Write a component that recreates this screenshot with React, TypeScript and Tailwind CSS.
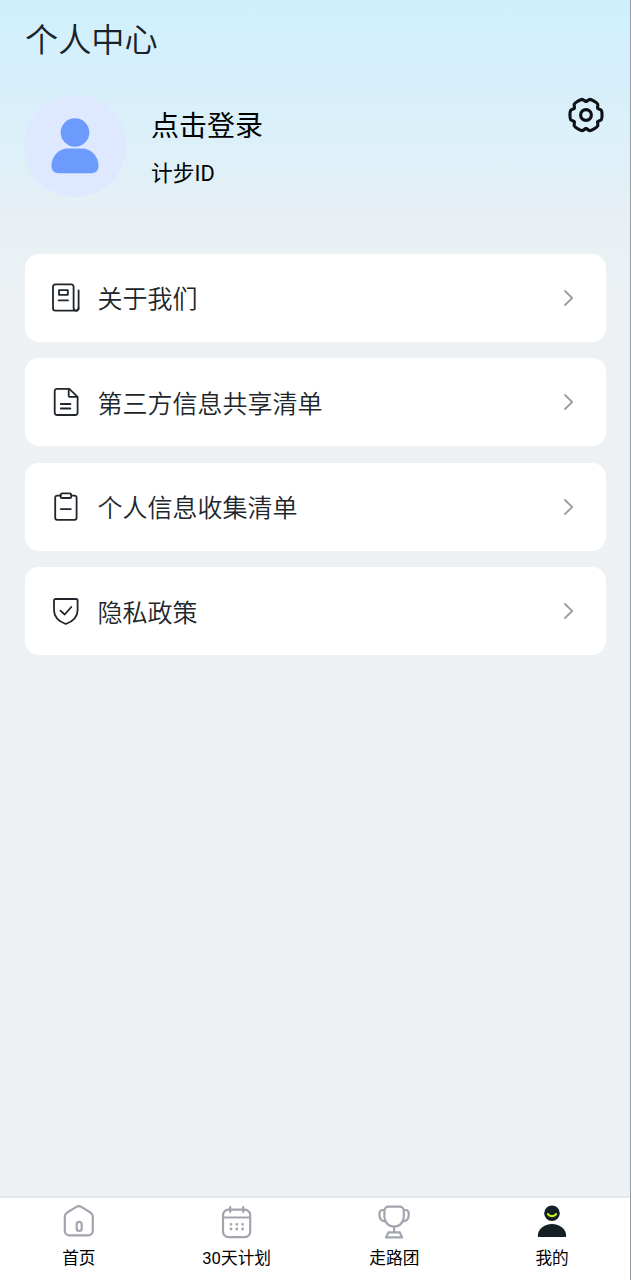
import React from 'react';

const AboutIcon = () => (
  <svg width="30" height="30" viewBox="0 0 30 30" fill="none" stroke="#20262b" strokeWidth="1.8" strokeLinecap="round" strokeLinejoin="round">
    <path d="M24.8 27.7H4.4A2.4 2.4 0 0 1 2 25.3V3.6A2.2 2.2 0 0 1 4.2 1.4h16.2A2.2 2.2 0 0 1 22.6 3.6v21.5a2.5 2.5 0 0 0 5 0V7.4" />
    <path d="M27.6 25.1a2.6 2.6 0 0 1-2.8 2.6" />
    <path d="M8 7.2h8.8v4.6H8zM7.6 17.4h9.4" />
  </svg>
);

const FileIcon = () => (
  <svg width="30" height="30" viewBox="0 0 30 30" fill="none" stroke="#20262b" strokeWidth="1.8" strokeLinecap="round" strokeLinejoin="round">
    <path d="M18.3 1.8H6A2.3 2.3 0 0 0 3.7 4.1v21.6A2.3 2.3 0 0 0 6 28h18.3a2.3 2.3 0 0 0 2.3-2.3V9.9z" />
    <path d="M17.7 2.2V9a.9.9 0 0 0 .9.9h7.6M9.8 17h9.6M9.8 21.5h9.6" />
  </svg>
);

const ClipboardIcon = () => (
  <svg width="30" height="30" viewBox="0 0 30 30" fill="none" stroke="#20262b" strokeWidth="1.8" strokeLinecap="round" strokeLinejoin="round">
    <path d="M9.8 3.6H6.2a2 2 0 0 0-2 2v20.2a2 2 0 0 0 2 2h17.4a2 2 0 0 0 2-2V5.6a2 2 0 0 0-2-2h-3.3" />
    <rect x="9.6" y="1.4" width="10.6" height="4.6" rx="1.6" />
    <path d="M9.8 17.1h10" />
  </svg>
);

const ShieldIcon = () => (
  <svg width="30" height="30" viewBox="0 0 30 30" fill="none" stroke="#20262b" strokeWidth="1.8" strokeLinecap="round" strokeLinejoin="round">
    <path d="M4.6 3h20.4a1.6 1.6 0 0 1 1.6 1.6v9.6c0 6.8-5.4 11.4-11.8 13.8C8.4 25.6 3 21 3 14.2V4.6A1.6 1.6 0 0 1 4.6 3z" />
    <path d="M9.4 14.6l4.3 3.9 6.6-7.5" />
  </svg>
);

// one lobe of the gear outline, repeated every 60 degrees
const GEAR_LOBE = 'M11.8-6.8C12.5-5.6 14.1-6 15.3-4.7 16.3-3.2 16.3 3.2 15.3 4.7 14.1 6 12.5 5.6 11.8 6.8';

const GearIcon = () => (
  <svg width="38" height="38" viewBox="-19 -19 38 38" fill="none" stroke="#0c1115" strokeWidth="3.1" strokeLinecap="round">
    {[0, 60, 120, 180, 240, 300].map((angle) => (
      <path key={angle} d={GEAR_LOBE} transform={`rotate(${angle})`} />
    ))}
    <circle r="5.4" />
  </svg>
);

const HomeIcon = () => (
  <svg width="36" height="36" viewBox="0 0 36 36" fill="none" stroke="#a2a5ae" strokeWidth="2.2" strokeLinejoin="round">
    <path d="M15.3 2.9L5.8 8.8A4.500 4.500 0 0 0 3.800 12.500V26.800a4.500 4.500 0 0 0 4.500 4.500h19a4.500 4.500 0 0 0 4.500-4.500V12.500a4.500 4.500 0 0 0-2-3.700L20.300 2.900a4.800 4.800 0 0 0-5 0z" />
    <rect x="15.7" y="17.8" width="5" height="9.2" rx="2.5" />
  </svg>
);

const CalendarIcon = () => (
  <svg width="36" height="36" viewBox="0 0 36 36" fill="none" stroke="#a2a5ae" strokeWidth="2.2" strokeLinecap="round">
    <rect x="4" y="5.6" width="27.2" height="27.6" rx="5.5" />
    <path d="M4.5 13.5h26.2M11.2 3v5M24.2 3v5" />
    <path d="M12 20.3h.01M17.8 20.3h.01M23.6 20.3h.01M12 25h.01M17.8 25h.01M23.6 25h.01" strokeWidth="2.8" />
  </svg>
);

const TrophyIcon = () => (
  <svg width="36" height="36" viewBox="0 0 36 36" fill="none" stroke="#a2a5ae" strokeWidth="2.2" strokeLinejoin="round">
    <path d="M12.5 2.6h11.200a4 4 0 0 1 4 4c0 3.500.8 6.200-.6 9.600-1.400 3.800-5 6.400-9 6.400s-7.600-2.600-9-6.400c-1.400-3.400-.6-6.100-.6-9.600a4 4 0 0 1 4-4z" />
    <path d="M8.300 6H6.200c-4.200 0-4.400 11.200 3.400 11.400M27.900 6H30c4.200 0 4.400 11.200-3.400 11.400M18.100 22.800v5.800M12.400 28.400h11.400l2.400 5H10z" />
  </svg>
);

const MineIcon = () => (
  <svg width="36" height="36" viewBox="0 0 36 36" fill="none">
    <circle cx="18" cy="9.3" r="7.8" fill="#151f26" />
    <path d="M14 10.2c1.400 2.500 6.600 2.500 8 0" stroke="#c4f51a" strokeWidth="2.3" strokeLinecap="round" />
    <path d="M3.800 32.200c0-7 6.300-12.100 14.200-12.100s14.200 5.100 14.200 12.100c0 .5-.3.800-.8.800H4.600c-.5 0-.8-.3-.8-.8z" fill="#151f26" />
  </svg>
);

const menu = [
  { label: '关于我们', icon: <AboutIcon /> },
  { label: '第三方信息共享清单', icon: <FileIcon /> },
  { label: '个人信息收集清单', icon: <ClipboardIcon /> },
  { label: '隐私政策', icon: <ShieldIcon /> },
];

const tabs = [
  { label: '首页', icon: <HomeIcon /> },
  { label: '30天计划', icon: <CalendarIcon /> },
  { label: '走路团', icon: <TrophyIcon /> },
  { label: '我的', icon: <MineIcon /> },
];

const App: React.FC = () => {
  return (
    <div className="flex h-[1280px] w-[631px] flex-col overflow-hidden border-r border-[#969da2] bg-[#edf1f4] bg-[linear-gradient(180deg,#d0f0fc_0px,#d6effd_75px,#dbf0f9_125px,#e1f0f7_180px,#e7eff5_215px,#e9f1f4_250px,#edf1f4_300px)] font-['Roboto','Noto_Sans_CJK_SC',sans-serif]">
      <header className="px-[25px] pt-[17px]">
        <h1 className="text-[33.2px] font-[350] leading-[48px] text-[#18232b]">个人中心</h1>
      </header>

      <section className="mt-[29.5px] flex h-[102px] items-start pl-6 pr-[25.5px]">
        <div className="flex size-[102px] items-center justify-center rounded-full bg-[#dee8fe]">
          <svg width="48" height="56" viewBox="0 0 48 56" fill="#6d9afd">
            <circle cx="24" cy="14.5" r="14.3" />
            <path d="M17 30.6h14c9.5 0 16.5 8 16.5 17 0 5-2.500 7.600-7 7.600H7.500c-4.500 0-7-2.600-7-7.600 0-9 7-17 16.500-17z" />
          </svg>
        </div>
        <div className="ml-[25px] flex flex-1 flex-col pt-3 text-black">
          <span className="text-[28px] leading-10">点击登录</span>
          <span className="mt-[11.5px] text-[21.8px] leading-8">计步ID</span>
        </div>
        <button className="mt-px">
          <GearIcon />
        </button>
      </section>

      <main className="mt-[57px] flex flex-1 flex-col gap-[16.5px] px-[24.5px]">
        {menu.map((item) => (
          <div key={item.label} className="flex h-[88px] items-center rounded-[14px] bg-white pl-[26px] pr-8">
            {item.icon}
            <span className="ml-[17px] flex-1 pt-[5px] text-[25px] font-[350] leading-9 text-[#20262b]">{item.label}</span>
            <svg width="11" height="18" viewBox="0 0 11 18" fill="none" stroke="#9b9da1" strokeWidth="1.8" strokeLinecap="round" strokeLinejoin="round">
              <path d="M2 2l7.2 7L2 16" />
            </svg>
          </div>
        ))}
      </main>

      <nav className="-mr-px grid h-[84px] grid-cols-4 border-t-2 border-[#e4e9ed] bg-white pt-1.5">
        {tabs.map((tab) => (
          <div key={tab.label} className="flex flex-col items-center">
            {tab.icon}
            <span className="mt-[7px] text-[16.7px] leading-6 text-black">{tab.label}</span>
          </div>
        ))}
      </nav>
    </div>
  );
};

export default App;
